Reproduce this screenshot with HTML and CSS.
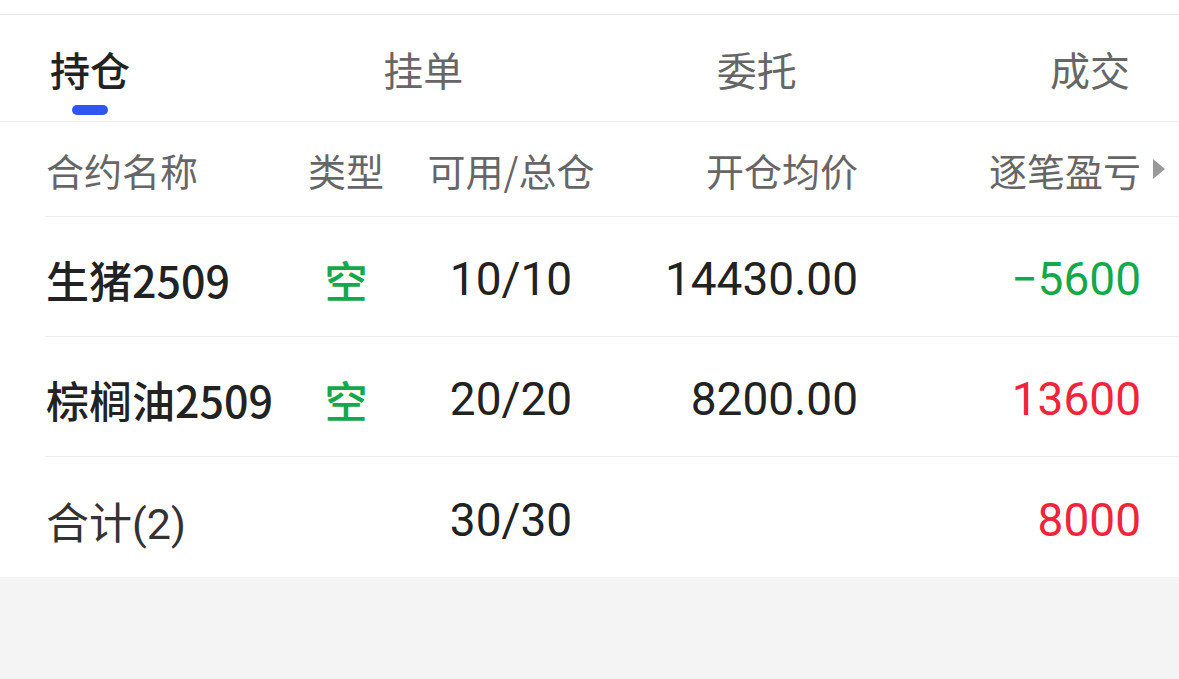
FILE: index.html
```html
<!DOCTYPE html>
<html lang="zh-CN">
<head>
    <meta charset="UTF-8">
    <meta name="viewport" content="width=device-width, initial-scale=1.0">
    <title>持仓</title>
    <link rel="stylesheet" href="styles.css">
</head>
<body>
    <div class="top-strip"></div>

    <div class="tabs">
        <div class="tab active">
            <span class="tab-label">持仓</span>
            <span class="tab-bar"></span>
        </div>
        <div class="tab"><span class="tab-label">挂单</span></div>
        <div class="tab"><span class="tab-label">委托</span></div>
        <div class="tab"><span class="tab-label">成交</span></div>
    </div>

    <div class="table">
        <div class="row head">
            <div class="cell name">合约名称</div>
            <div class="cell center">类型</div>
            <div class="cell center">可用/总仓</div>
            <div class="cell right">开仓均价</div>
            <div class="cell right">逐笔盈亏<span class="arrow"></span></div>
        </div>
        <div class="row">
            <div class="cell name">生猪2509</div>
            <div class="cell center side green">空</div>
            <div class="cell center num">10/10</div>
            <div class="cell right num">14430.00</div>
            <div class="cell right num green">−5600</div>
        </div>
        <div class="row">
            <div class="cell name">棕榈油2509</div>
            <div class="cell center side green">空</div>
            <div class="cell center num">20/20</div>
            <div class="cell right num">8200.00</div>
            <div class="cell right num red">13600</div>
        </div>
        <div class="row total">
            <div class="cell name plain">合计(2)</div>
            <div class="cell center"></div>
            <div class="cell center num">30/30</div>
            <div class="cell right num"></div>
            <div class="cell right num red">8000</div>
        </div>
    </div>
</body>
</html>
```

FILE: styles.css
```css
body {
    margin: 0;
    background-color: #f4f4f4;
    font-family: Roboto, "Noto Sans CJK SC", sans-serif;
    color: #222;
}
.top-strip {
    height: 14px;
    background-color: #fff;
    border-bottom: 1px solid #e6e6e6;
}
.tabs {
    display: flex;
    justify-content: space-between;
    height: 106px;
    padding: 0 49px 0 50px;
    background-color: #fff;
    border-bottom: 1px solid #ececec;
}
.tab {
    display: flex;
    flex-direction: column;
    align-items: center;
    padding-top: 26px;
}
.tab-label {
    font-family: "Noto Sans CJK SC", sans-serif;
    font-size: 40px;
    line-height: 56px;
    color: #666;
}
.tab.active .tab-label {
    color: #222;
    font-weight: 500;
}
.tab-bar {
    width: 36px;
    height: 10px;
    margin-top: 8px;
    border-radius: 5px;
    background-color: #2f56f5;
}
.table {
    background-color: #fff;
}
.row {
    display: grid;
    grid-template-columns: 250px 100px 230px 232px 1fr;
    align-items: center;
    box-sizing: border-box;
    height: 120px;
    margin-left: 45px;
    padding: 5px 38px 0 1px;
    border-bottom: 1px solid #ececec;
}
.row.head {
    height: 95px;
    padding-top: 0;
    font-family: "Noto Sans CJK SC", sans-serif;
    font-size: 38px;
    color: #666;
}
.row.total {
    border-bottom: none;
}
.cell {
    white-space: nowrap;
}
.name {
    font-family: "Noto Sans CJK SC", sans-serif;
    font-size: 43px;
    font-weight: 500;
    color: #222;
}
.head .name {
    font-size: 38px;
    font-weight: 400;
    color: #666;
}
.name.plain {
    font-family: Roboto, "Noto Sans CJK SC", sans-serif;
    font-weight: 400;
    color: #333;
}
.center {
    text-align: center;
    font-size: 43px;
}
.head .center {
    font-size: 38px;
}
.side {
    font-family: "Noto Sans CJK SC", sans-serif;
    font-weight: 500;
}
.right {
    display: flex;
    justify-content: flex-end;
    align-items: center;
}
.num {
    font-family: Roboto, sans-serif;
    font-size: 46px;
    font-weight: 400;
    color: #222;
}
.green {
    color: #13a84a;
}
.red {
    color: #f2233b;
}
.arrow {
    width: 0;
    height: 0;
    margin-left: 12px;
    margin-right: -24px;
    border-left: 12px solid #999;
    border-top: 10px solid transparent;
    border-bottom: 10px solid transparent;
}
```
